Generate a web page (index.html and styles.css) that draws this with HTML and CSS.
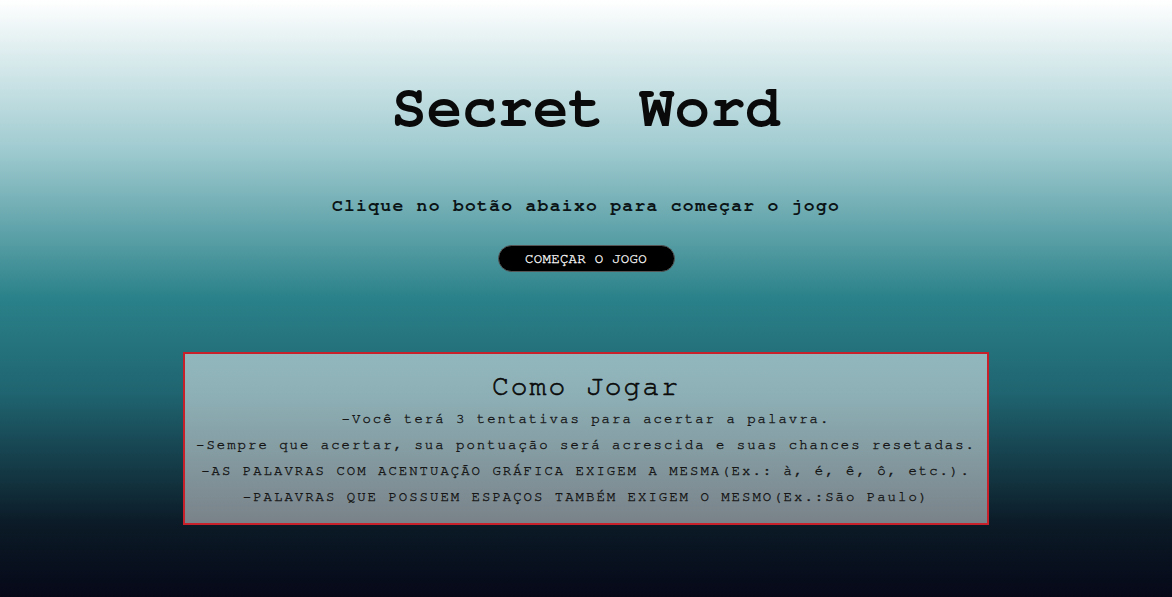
FILE: index.html
```html
<!DOCTYPE html>
<html lang="pt-BR">
<head>
<meta charset="utf-8">
<title>Secret Word</title>
<link rel="stylesheet" href="styles.css">
</head>
<body>
<main class="start">
  <h1 class="title">Secret Word</h1>
  <p class="subtitle">Clique no botão abaixo para começar o jogo</p>
  <button class="start-btn">COMEÇAR O JOGO</button>
  <section class="rules">
    <h2 class="rules-title">Como Jogar</h2>
    <p class="rule">-Você terá 3 tentativas para acertar a palavra.</p>
    <p class="rule">-Sempre que acertar, sua pontuação será acrescida e suas chances resetadas.</p>
    <p class="rule">-AS PALAVRAS COM ACENTUAÇÃO GRÁFICA EXIGEM A MESMA(Ex.: à, é, ê, ô, etc.).</p>
    <p class="rule">-PALAVRAS QUE POSSUEM ESPAÇOS TAMBÉM EXIGEM O MESMO(Ex.:São Paulo)</p>
  </section>
</main>
</body>
</html>
```
FILE: styles.css
```css
html, body {
  margin: 0;
  padding: 0;
}
body {
  min-height: 100vh;
  background: linear-gradient(to bottom, #ffffff 0%, #9fcbd0 25%, #2a8189 50%, #1f6470 66%, #0b1a26 88%, #060818 100%);
  font-family: "Nimbus Mono PS", "FreeMono", "Courier", "Liberation Mono", monospace;
  color: #000;
}
.start {
  display: flex;
  flex-direction: column;
  align-items: center;
  padding-top: 76px;
}
.title {
  margin: 0;
  font-size: 59px;
  font-weight: bold;
  line-height: 66px;
  color: #0a0a0a;
}
.subtitle {
  margin: 53px 0 0;
  font-size: 18px;
  font-weight: bold;
  letter-spacing: 1.3px;
  line-height: 22px;
  color: #0b1416;
}
.start-btn {
  margin-top: 28px;
  width: 177px;
  height: 27px;
  background: #000;
  color: #fff;
  border: 1px solid #555;
  border-radius: 14px;
  font-family: "Nimbus Mono PS", "FreeMono", "Courier", "Liberation Mono", monospace;
  font-size: 14px;
  letter-spacing: 0.3px;
  -webkit-text-stroke: 0.3px #fff;
  padding: 0;
}
.rules {
  margin-top: 80px;
  width: 802px;
  box-sizing: content-box;
  border: 2px solid #c8202a;
  background: linear-gradient(to bottom, rgba(255,255,255,0.5), rgba(255,255,255,0.45));
  text-align: center;
  padding: 16px 0 13px;
}
.rules-title {
  margin: 0 0 2px;
  font-size: 28px;
  font-weight: normal;
  letter-spacing: 2px;
  line-height: 34px;
  color: #0a0a0a;
  -webkit-text-stroke: 0.6px #0a0a0a;
}
.rule {
  margin: 0;
  font-size: 14px;
  letter-spacing: 2px;
  line-height: 26px;
  color: #151515;
  -webkit-text-stroke: 0.35px #151515;
}
```
